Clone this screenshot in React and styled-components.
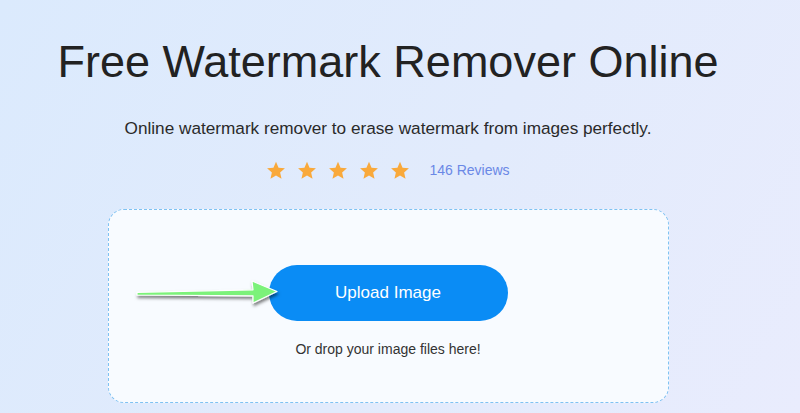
import React from "react";
import styled, { createGlobalStyle } from "styled-components";

const GlobalStyle = createGlobalStyle`
  html, body {
    margin: 0;
    padding: 0;
  }
  body {
    font-family: "Liberation Sans", Arial, sans-serif;
    background: linear-gradient(120deg, #dbeafd 0%, #e2ebfc 55%, #e9ecfd 100%);
    min-height: 413px;
    overflow: hidden;
  }
`;

const Page = styled.div`
  width: 776px;
  height: 413px;
  display: flex;
  flex-direction: column;
  align-items: center;
`;

const Title = styled.h1`
  margin: 35px 0 0;
  font-size: 45px;
  line-height: 53px;
  font-weight: 400;
  color: #222;
`;

const Subtitle = styled.p`
  margin: 30px 0 0;
  font-size: 17.2px;
  line-height: 20px;
  color: #2a2a2a;
`;

const RatingRow = styled.div`
  display: flex;
  align-items: center;
  margin-top: 20px;
  height: 24px;
`;

const Stars = styled.div`
  display: flex;
  gap: 11px;
`;

const Reviews = styled.span`
  margin-left: 19px;
  font-size: 14px;
  color: #6a88e6;
`;

const DropZone = styled.div`
  position: relative;
  margin-top: 27px;
  width: 559px;
  height: 192px;
  border: 1px dashed #7fc2f2;
  border-radius: 16px;
  background: rgba(250, 252, 255, 0.92);
  display: flex;
  flex-direction: column;
  align-items: center;
`;

const UploadButton = styled.button`
  margin-top: 55px;
  width: 239px;
  height: 56px;
  border: none;
  border-radius: 28px;
  background: #0a8cf5;
  color: #fff;
  font-family: "Liberation Sans", Arial, sans-serif;
  font-size: 17px;
  cursor: pointer;
`;

const DropHint = styled.p`
  margin: 20px 0 0;
  font-size: 14px;
  color: #333;
`;

const Arrow = styled.svg`
  position: absolute;
  left: 26px;
  top: 67px;
  overflow: visible;
`;

const Star = () => (
  <svg width="20" height="19" viewBox="0 0 24 23">
    <path
      d="M12 1l3.1 7.1 7.7.7-5.8 5.1 1.7 7.6L12 17.5l-6.7 4 1.7-7.6L1.2 8.8l7.7-.7z"
      fill="#f9a93b"
    />
  </svg>
);

const App = () => (
  <>
    <GlobalStyle />
    <Page>
      <Title>Free Watermark Remover Online</Title>
      <Subtitle>Online watermark remover to erase watermark from images perfectly.</Subtitle>
      <RatingRow>
        <Stars>
          {[0, 1, 2, 3, 4].map((i) => (
            <Star key={i} />
          ))}
        </Stars>
        <Reviews>146 Reviews</Reviews>
      </RatingRow>
      <DropZone>
        <Arrow width="150" height="30" viewBox="0 0 150 30">
          <defs>
            <filter id="arrowShadow" x="-10%" y="-50%" width="120%" height="200%">
              <feDropShadow dx="1" dy="2.5" stdDeviation="1.8" floodColor="#000" floodOpacity="0.5" />
            </filter>
          </defs>
          <path
            d="M2 15.3 L118 12.8 L117 4 L142 14.5 L118 26 L118 18.8 L2 18 Z"
            fill="#7cf27a"
            stroke="#ffffff"
            strokeWidth="1.2"
            strokeLinejoin="round"
            filter="url(#arrowShadow)"
          />
        </Arrow>
        <UploadButton>Upload Image</UploadButton>
        <DropHint>Or drop your image files here!</DropHint>
      </DropZone>
    </Page>
  </>
);

export default App;
